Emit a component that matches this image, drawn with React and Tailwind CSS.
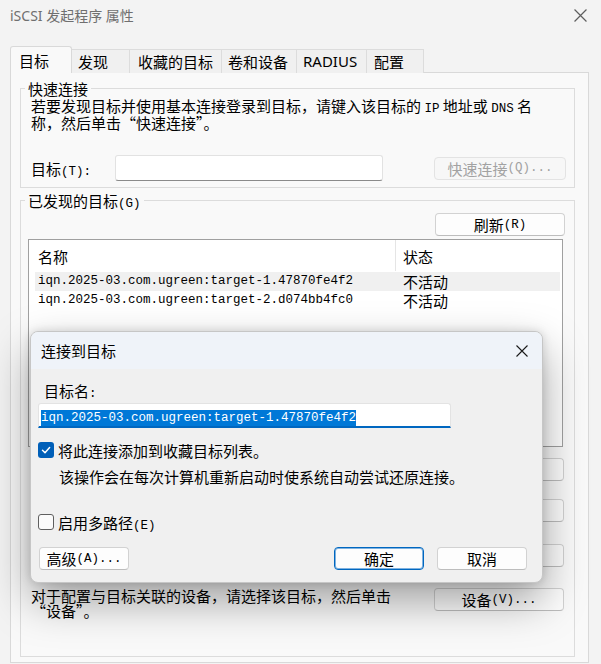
import React from "react";

const mono = "font-['Liberation_Mono',monospace] text-[12.5px]";
// inline Latin inside CJK text: must not grow the line box
const lat = "font-['Liberation_Mono',monospace] text-[12.5px] leading-[10px]";

const tabs = [
  { label: "发现", cls: "w-[58px] pl-[6px]" },
  { label: "收藏的目标", cls: "w-[92px] pl-[8px]" },
  { label: "卷和设备", cls: "w-[75px] pl-[6px]" },
  { label: "RADIUS", cls: "w-[70px] pl-[6px] font-['Noto_Sans',sans-serif]" },
  { label: "配置", cls: "w-[57px] pl-[7px]" },
];

const targets = [
  "iqn.2025-03.com.ugreen:target-1.47870fe4f2",
  "iqn.2025-03.com.ugreen:target-2.d074bb4fc0",
];

function Button({ children, className = "", disabled = false, primary = false }) {
  const tone = disabled
    ? "border-[#e3e3e3] bg-[#f7f7f7] text-[#a2a2a2]"
    : primary
    ? "border-[#0067c0] bg-[#fdfdfd] shadow-[inset_0_0_0_1px_#7fb2e0]"
    : "border-[#d2d2d2] border-b-[#bdbdbd] bg-[#fdfdfd]";
  return (
    <div
      className={`flex h-[23px] shrink-0 items-center justify-center rounded-[4px] border leading-[17px] ${tone} ${className}`}
    >
      {children}
    </div>
  );
}

function Cross({ size = 12, color = "#000" }) {
  return (
    <svg width={size} height={size} viewBox="0 0 12 12" fill="none" stroke={color} strokeWidth="1.1">
      <path d="M0.5 0.5 11.5 11.5M11.5 0.5 0.5 11.5" />
    </svg>
  );
}

export default function App() {
  return (
    <div className="relative h-[664px] w-[601px] overflow-hidden bg-[#f3f3f3] font-['Noto_Sans_CJK_SC',sans-serif] text-[15px] leading-[17px] text-black">
      {/* title bar */}
      <div className="flex h-[31px] items-center justify-between pl-[10px] pr-[14px]">
        <span className="font-['Noto_Sans','Noto_Sans_CJK_SC',sans-serif] text-[14px] text-[#6f6f6f]">
          iSCSI 发起程序 属性
        </span>
        <Cross size={13} color="#5e5e5e" />
      </div>

      {/* tabs */}
      <div className="mt-[15px] flex h-[27px] items-end pl-[10px]">
        <div className="relative z-10 flex h-[27px] w-[62px] items-center rounded-t-[3px] border-x border-t border-[#d9d9d9] bg-[#f9f9f9] pl-[8px]">
          目标
        </div>
        {tabs.map((t) => (
          <div
            key={t.label}
            className={`flex h-[24px] items-center border-r border-t border-[#dcdcdc] bg-[#f0f0f0] ${t.cls}`}
          >
            {t.label}
          </div>
        ))}
      </div>

      {/* tab panel */}
      <div className="-mt-px ml-[10px] h-[591px] w-[579px] border border-[#d9d9d9] bg-[#f9f9f9] pl-[9px] pr-[13px] pt-[7px]">
        <fieldset className="border border-[#dcdcdc]">
          <legend className="ml-[4px] px-[3px] leading-[17px]">快速连接</legend>
          <div className="pb-[6px] pl-[10px] pr-[8px]">
            <p>
              若要发现目标并使用基本连接登录到目标，请键入该目标的 <span className={lat}>IP</span> 地址或{" "}
              <span className={lat}>DNS</span> 名
              <br />
              称，然后单击“快速连接”。
            </p>
            <div className="mt-[24px] flex h-[26px] items-center">
              <div className="w-[84px]">
                目标<span className={lat}>(T):</span>
              </div>
              <div className="h-[26px] w-[268px] rounded-[3px] border border-[#e2e2e2] border-b-[#8a8a8a] bg-white" />
              <Button disabled className="ml-auto w-[132px]">
                快速连接<span className={lat}>(Q)...</span>
              </Button>
            </div>
          </div>
        </fieldset>

        <fieldset className="mt-[4px] border border-[#dcdcdc]">
          <legend className="ml-[4px] px-[3px] leading-[17px]">
            已发现的目标<span className={lat}>(G)</span>
          </legend>
          <div className="pb-[38px]">
            <div className="mt-[4px] flex justify-end pr-[9px]">
              <Button className="w-[130px]">
                刷新<span className={lat}>(R)</span>
              </Button>
            </div>

            {/* list view */}
            <div className="ml-[7px] mt-[3px] h-[208px] w-[535px] border border-[#a0a0a0] bg-white">
              <div className="flex h-[31px]">
                <div className="flex w-[367px] items-center border-r border-[#e5e5e5] pl-[9px] pt-[2px]">名称</div>
                <div className="flex items-center pl-[7px] pt-[2px]">状态</div>
              </div>
              <div className="ml-[6px] mr-[2px] mt-[1px]">
                {targets.map((t, i) => (
                  <div key={t} className={`flex h-[19px] items-center ${i === 0 ? "bg-[#f0f0f0]" : ""}`}>
                    <div className={`w-[368px] pl-[3px] leading-[19px] ${mono}`}>{t}</div>
                    <div>不活动</div>
                  </div>
                ))}
              </div>
            </div>

            {/* buttons mostly hidden behind the dialog */}
            <div className="mt-[11px] flex justify-end pr-[10px]">
              <Button className="w-[130px]" />
            </div>
            <div className="mt-[18px] flex justify-end pr-[10px]">
              <Button className="w-[130px]" />
            </div>
            <div className="mt-[22px] flex justify-end pr-[10px]">
              <Button className="w-[130px]" />
            </div>
            <div className="mt-[21px] flex items-start pl-[10px] pr-[10px]">
              <p className="w-[380px] leading-[15px]">
                对于配置与目标关联的设备，请选择该目标，然后单击
                <br />
                “设备”。
              </p>
              <Button className="ml-auto w-[130px]">
                设备<span className={lat}>(V)...</span>
              </Button>
            </div>
          </div>
        </fieldset>
      </div>

      {/* connect dialog */}
      <div className="absolute left-[30px] top-[331px] flex h-[252px] w-[513px] flex-col overflow-hidden rounded-[8px] border border-[#c6c6c6] bg-[#f0f0f0] shadow-[0_18px_44px_rgba(0,0,0,0.36),0_0_10px_rgba(0,0,0,0.14)]">
        <div className="flex h-[37px] shrink-0 items-center justify-between bg-[#eff3f9] pl-[10px] pr-[14px]">
          <span>连接到目标</span>
          <Cross size={12} color="#1a1a1a" />
        </div>
        <div className="pl-[7px] pr-[15px]">
          <div className="mt-[13px] pl-[6px]">
            目标名<span className={lat}>:</span>
          </div>
          <div className="mt-[4px] h-[25px] w-[413px] rounded-t-[3px] border border-[#e3e3e3] border-b-2 border-b-[#0067c0] bg-white pl-[2px] pt-[2px]">
            <span className={`inline-block bg-[#0078d7] leading-[16px] text-white ${mono}`}>{targets[0]}</span>
          </div>
          <div className="mt-[14px] flex h-[16px] items-center">
            <div className="flex h-[16px] w-[16px] items-center justify-center rounded-[3px] bg-[#005fb8]">
              <svg width="12" height="12" viewBox="0 0 12 12" fill="none" stroke="#fff" strokeWidth="1.5" strokeLinecap="round" strokeLinejoin="round">
                <path d="M2.5 6.3 5 8.7 9.6 3.6" />
              </svg>
            </div>
            <span className="ml-[4px]">将此连接添加到收藏目标列表。</span>
          </div>
          <p className="mt-[10px] pl-[21px]">该操作会在每次计算机重新启动时使系统自动尝试还原连接。</p>
          <div className="mt-[29px] flex h-[16px] items-center">
            <div className="h-[16px] w-[16px] rounded-[3px] border border-[#5f5f5f] bg-[#fbfbfb]" />
            <span className="ml-[4px]">
              启用多路径<span className={lat}>(E)</span>
            </span>
          </div>
          <div className="mt-[17px] flex">
            <Button className="ml-[1px] w-[90px]">
              高级<span className={lat}>(A)...</span>
            </Button>
            <Button primary className="ml-auto w-[90px]">
              确定
            </Button>
            <Button className="ml-[13px] w-[90px]">取消</Button>
          </div>
        </div>
      </div>
    </div>
  );
}
